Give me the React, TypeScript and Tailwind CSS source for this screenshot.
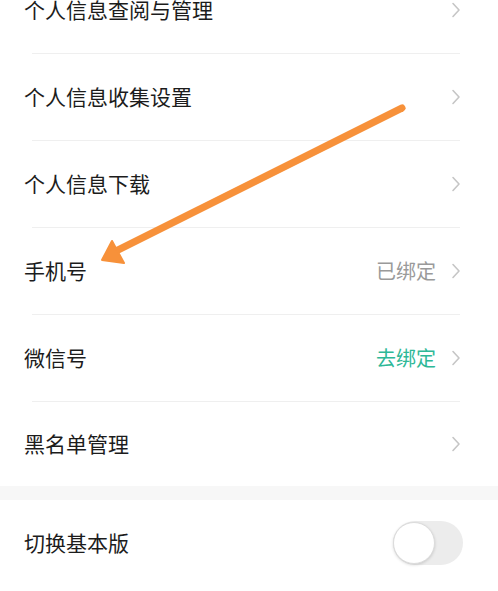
import React from "react";

const Chevron = () => (
  <svg width="10" height="16" viewBox="0 0 10 16" className="shrink-0">
    <path d="M2 1.5 L8 8 L2 14.5" fill="none" stroke="#c6c6c6" strokeWidth="1.6" strokeLinecap="round" strokeLinejoin="round" />
  </svg>
);

type RowProps = { label: string; value?: string; valueClass?: string; divider?: boolean; last?: boolean };

const Row = ({ label, value, valueClass, divider = true, last = false }: RowProps) => (
  <div className="px-6">
    <div className={`flex items-center justify-between ${last ? "h-[84px]" : "h-[86px]"}`}>
      <span className="text-[21px] text-[#1c1c1c]">{label}</span>
      <div className="flex items-center gap-[15px] pr-[13px]">
        {value && <span className={`text-[20px] ${valueClass}`}>{value}</span>}
        <Chevron />
      </div>
    </div>
    {divider && <div className="ml-2 mr-[14px] h-px bg-[#efefef]" />}
  </div>
);

export default function App() {
  return (
    <div
      className="relative h-[591px] w-[498px] overflow-hidden bg-white"
      style={{ fontFamily: '"Noto Sans CJK SC", "Noto Sans", sans-serif' }}
    >
      <div className="-mt-[33px]">
        <Row label="个人信息查阅与管理" />
        <Row label="个人信息收集设置" />
        <Row label="个人信息下载" />
        <Row label="手机号" value="已绑定" valueClass="text-[#9a9a9a]" />
        <Row label="微信号" value="去绑定" valueClass="text-[#2eb897]" />
        <Row label="黑名单管理" divider={false} last />
        <div className="h-[14px] bg-[#f7f7f7]" />
        <div className="flex h-[86px] items-center justify-between pl-6 pr-[35px]">
          <span className="text-[21px] text-[#1c1c1c]">切换基本版</span>
          <div className="relative h-[44px] w-[70px] rounded-full bg-[#ececec]">
            <div className="absolute left-0 top-[1px] h-[42px] w-[42px] rounded-full border border-[#dcdcdc] bg-white shadow-[0_1px_3px_rgba(0,0,0,0.15)]" />
          </div>
        </div>
      </div>
      <svg className="pointer-events-none absolute left-0 top-0" width="498" height="591" viewBox="0 0 498 591">
        <line x1="402" y1="108" x2="116" y2="251" stroke="#f7913a" strokeWidth="7" strokeLinecap="round" />
        <polygon points="102,260 112,241 124,263" fill="#f7913a" stroke="#f7913a" strokeWidth="2" strokeLinejoin="round" />
      </svg>
    </div>
  );
}
